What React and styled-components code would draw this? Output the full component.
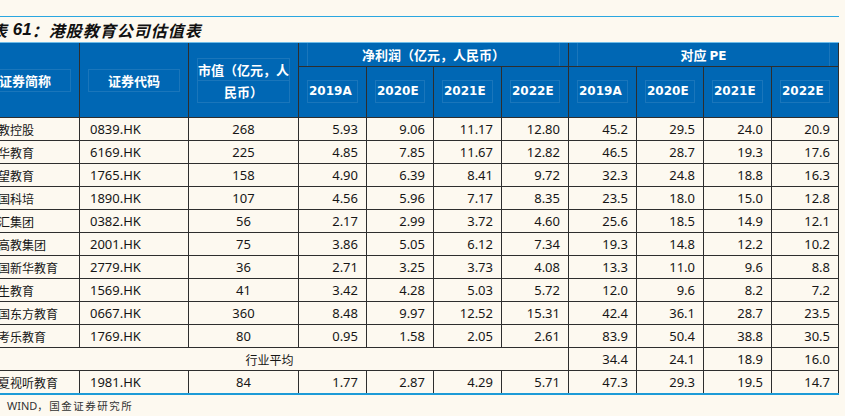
import React from 'react';
import styled, { createGlobalStyle } from 'styled-components';

const Global = createGlobalStyle`
  html, body { margin: 0; padding: 0; background: #fdf9f0; }
  body { font-family: "Noto Sans", "Noto Sans CJK SC", sans-serif; overflow: hidden; color: #161616; }
`;

const Page = styled.div`
  margin-left: -29px;
  width: 868px;
  padding-top: 16px;
`;

const TopRule = styled.div`
  height: 1px;
  background: #2aa7e0;
`;

const TitleBar = styled.div`
  height: 25px;
  display: flex;
  align-items: center;
  padding-left: 20px;
  font-family: "Liberation Sans", "Noto Sans CJK SC", sans-serif;
  font-size: 16px;
  font-weight: 700;
  font-style: italic;
  color: #111;
  white-space: pre;
`;

const TitleNum = styled.span`
  font-family: "Liberation Sans", sans-serif;
  font-size: 17px;
`;

const TitleText = styled.span`
  font-family: "Noto Sans CJK SC", sans-serif;
  letter-spacing: 1px;
`;

const HeaderRule = styled.div`
  height: 1px;
  background: #6fbde9;
`;

const Grid = styled.div`
  display: grid;
  grid-template-columns: 108px 108px 109px 67px 66px 67px 66px 67px 66px 67px 66px;
  grid-template-rows: 23px 50px repeat(12, 22px);
  gap: 1px;
  padding-right: 1px;
  background: #2e2e2e;
`;

const HeadCell = styled.div`
  grid-row: ${(p) => p.$row || 'auto'};
  grid-column: ${(p) => p.$col || 'auto'};
  background: #0067b4;
  color: #fff;
  display: flex;
  align-items: center;
  justify-content: center;
  font-family: "DejaVu Sans", "Noto Sans CJK SC", sans-serif;
  font-size: 13px;
  font-weight: 700;
`;

const faint = 'rgba(255, 255, 255, 0.1)';

const Frame = styled.div`
  flex: 1;
  margin: 0 8px;
  height: ${(p) => (p.$full ? 'auto' : '21px')};
  align-self: ${(p) => (p.$full ? 'stretch' : 'center')};
  border: 1px solid ${faint};
  border-top-width: ${(p) => (p.$full ? 0 : 1)}px;
  border-bottom-width: ${(p) => (p.$full ? 0 : 1)}px;
  display: flex;
  align-items: center;
  justify-content: center;
  white-space: nowrap;
  font-family: "Noto Sans CJK SC", sans-serif;
`;

const PeLabel = styled.span`
  font-family: "Noto Sans CJK SC", sans-serif;
  & b { font-family: "DejaVu Sans", sans-serif; font-size: 12px; }
`;

const FrameStack = styled.div`
  flex: 1;
  margin: 0 8px;
  display: flex;
  flex-direction: column;
  border: 1px solid ${faint};
  font-family: "Noto Sans CJK SC", sans-serif;
`;

const FrameLine = styled.div`
  height: 21px;
  display: flex;
  align-items: center;
  justify-content: center;
  white-space: nowrap;
  & + & { border-top: 1px solid ${faint}; }
`;

const YearFrame = styled.div`
  flex: 1;
  margin: -2px 8px 0;
  height: 21px;
  border: 1px solid ${faint};
  display: flex;
  align-items: center;
  padding-left: 1px;
  font-size: 12px;
  white-space: nowrap;
`;

const Cell = styled.div`
  grid-column: ${(p) => (p.$span ? `span ${p.$span}` : 'auto')};
  background: #fdf9f0;
  display: flex;
  align-items: center;
  justify-content: ${(p) => (p.$align === 'left' ? 'flex-start' : p.$align === 'center' ? 'center' : 'flex-end')};
  padding-left: ${(p) => (p.$align === 'left' ? '10px' : '8px')};
  padding-right: 8px;
  font-size: 13px;
  white-space: nowrap;
  overflow: hidden;
`;

const NameCell = styled(Cell)`
  padding-left: 15px;
  font-family: "Noto Sans CJK SC", sans-serif;
  font-size: 12px;
`;

const AvgCell = styled(Cell)`
  justify-content: center;
  font-family: "Noto Sans CJK SC", sans-serif;
  font-size: 12px;
`;

const BottomRule = styled.div`
  height: 2px;
  background: #1d9bd7;
`;

const Source = styled.div`
  height: 20px;
  display: flex;
  align-items: center;
  padding-left: 36px;
  font-size: 11px;
  color: #333;
`;

const SourceCn = styled.span`
  font-family: "Noto Sans CJK SC", serif;
  letter-spacing: 1.5px;
  font-size: 10.5px;
`;

const years = ['2019A', '2020E', '2021E', '2022E'];

const rows = [
  ['中教控股', '0839.HK', '268', '5.93', '9.06', '11.17', '12.80', '45.2', '29.5', '24.0', '20.9'],
  ['宇华教育', '6169.HK', '225', '4.85', '7.85', '11.67', '12.82', '46.5', '28.7', '19.3', '17.6'],
  ['希望教育', '1765.HK', '158', '4.90', '6.39', '8.41', '9.72', '32.3', '24.8', '18.8', '16.3'],
  ['中国科培', '1890.HK', '107', '4.56', '5.96', '7.17', '8.35', '23.5', '18.0', '15.0', '12.8'],
  ['中汇集团', '0382.HK', '56', '2.17', '2.99', '3.72', '4.60', '25.6', '18.5', '14.9', '12.1'],
  ['新高教集团', '2001.HK', '75', '3.86', '5.05', '6.12', '7.34', '19.3', '14.8', '12.2', '10.2'],
  ['中国新华教育', '2779.HK', '36', '2.71', '3.25', '3.73', '4.08', '13.3', '11.0', '9.6', '8.8'],
  ['民生教育', '1569.HK', '41', '3.42', '4.28', '5.03', '5.72', '12.0', '9.6', '8.2', '7.2'],
  ['中国东方教育', '0667.HK', '360', '8.48', '9.97', '12.52', '15.31', '42.4', '36.1', '28.7', '23.5'],
  ['思考乐教育', '1769.HK', '80', '0.95', '1.58', '2.05', '2.61', '83.9', '50.4', '38.8', '30.5'],
  { avg: ['34.4', '24.1', '18.9', '16.0'] },
  ['华夏视听教育', '1981.HK', '84', '1.77', '2.87', '4.29', '5.71', '47.3', '29.3', '19.5', '14.7'],
];

function DataRow({ r }) {
  if (r.avg) {
    return (
      <>
        <AvgCell $span={7}>行业平均</AvgCell>
        {r.avg.map((v, i) => (
          <Cell key={i}>{v}</Cell>
        ))}
      </>
    );
  }
  return (
    <>
      <NameCell $align="left">{r[0]}</NameCell>
      <Cell $align="left">{r[1]}</Cell>
      <Cell $align="center">{r[2]}</Cell>
      {r.slice(3).map((v, i) => (
        <Cell key={i}>{v}</Cell>
      ))}
    </>
  );
}

export default function App() {
  return (
    <>
      <Global />
      <Page>
        <TopRule />
        <TitleBar>
          <TitleText>表</TitleText>
          <TitleNum> 61</TitleNum>
          <TitleText>：港股教育公司估值表</TitleText>
        </TitleBar>
        <HeaderRule />
        <Grid>
          <HeadCell $row="span 2">
            <Frame>证券简称</Frame>
          </HeadCell>
          <HeadCell $row="span 2">
            <Frame>证券代码</Frame>
          </HeadCell>
          <HeadCell $row="span 2">
            <FrameStack>
              <FrameLine>市值（亿元，人</FrameLine>
              <FrameLine>民币）</FrameLine>
            </FrameStack>
          </HeadCell>
          <HeadCell $col="span 4">
            <Frame $full>净利润（亿元，人民币）</Frame>
          </HeadCell>
          <HeadCell $col="span 4">
            <Frame $full>
              <PeLabel>
                对应 <b>PE</b>
              </PeLabel>
            </Frame>
          </HeadCell>
          {[...years, ...years].map((y, i) => (
            <HeadCell key={i}>
              <YearFrame>{y}</YearFrame>
            </HeadCell>
          ))}
          {rows.map((r, i) => (
            <DataRow key={i} r={r} />
          ))}
        </Grid>
        <BottomRule />
        <Source>
          WIND<SourceCn>，国金证券研究所</SourceCn>
        </Source>
      </Page>
    </>
  );
}
